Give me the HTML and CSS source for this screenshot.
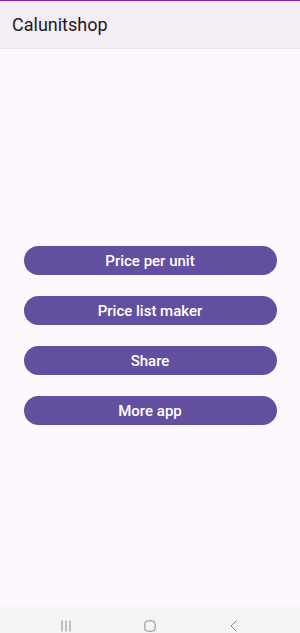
FILE: index.html
```html
<!DOCTYPE html>
<html lang="en">
<head>
    <meta charset="UTF-8">
    <meta name="viewport" content="width=device-width, initial-scale=1.0">
    <title>Calunitshop</title>
    <link rel="stylesheet" href="styles.css">
</head>
<body>
    <div class="app">
        <div class="topbar">Calunitshop</div>
        <div class="main">
            <button class="btn">Price per unit</button>
            <button class="btn">Price list maker</button>
            <button class="btn">Share</button>
            <button class="btn">More app</button>
        </div>
        <div class="navbar">
            <div class="nav-item">
                <svg width="10" height="12" viewBox="0 0 10 12">
                    <path d="M1 0.5V11.5M5 0.5V11.5M9 0.5V11.5" stroke="#8a8a8a" stroke-width="1" fill="none"/>
                </svg>
            </div>
            <div class="nav-item">
                <svg width="12" height="12" viewBox="0 0 12 12">
                    <rect x="0.8" y="0.8" width="10.4" height="10.4" rx="3" stroke="#8a8a8a" stroke-width="1" fill="none"/>
                </svg>
            </div>
            <div class="nav-item">
                <svg width="8" height="12" viewBox="0 0 8 12">
                    <path d="M6.5 0.5L1 6L6.5 11.5" stroke="#8a8a8a" stroke-width="1" fill="none"/>
                </svg>
            </div>
        </div>
    </div>
</body>
</html>
```
FILE: styles.css
```css
body{
    margin: 0;
    font-family: Roboto, "Liberation Sans", sans-serif;
    background-color: #fdf8fd;
}
.app{
    display: flex;
    flex-direction: column;
    height: 633px;
}
.topbar{
    border-top: 1px solid #8a22b8;
    border-bottom: 1px solid #ebe6ee;
    background-color: #f3edf6;
    display: flex;
    align-items: center;
    padding-left: 12px;
    padding-bottom: 1px;
    box-sizing: border-box;
    height: 49px;
    font-size: 18px;
    color: #1d1b20;
}
.main{
    flex: 1;
    display: flex;
    flex-direction: column;
    align-items: center;
    padding-top: 197px;
    gap: 21px;
}
.btn{
    width: 253px;
    height: 29px;
    border: none;
    border-radius: 15px;
    background-color: #634f9f;
    color: #ffffff;
    font-family: Roboto, "Liberation Sans", sans-serif;
    font-size: 15px;
    font-weight: 500;
    padding: 0;
}
.navbar{
    height: 27px;
    background-color: #f5f4f7;
    display: flex;
    padding: 0 24px 1px 24px;
    align-items: flex-end;
}
.nav-item{
    width: 84px;
    display: flex;
    justify-content: center;
}
.nav-item svg{
    display: block;
}
```
